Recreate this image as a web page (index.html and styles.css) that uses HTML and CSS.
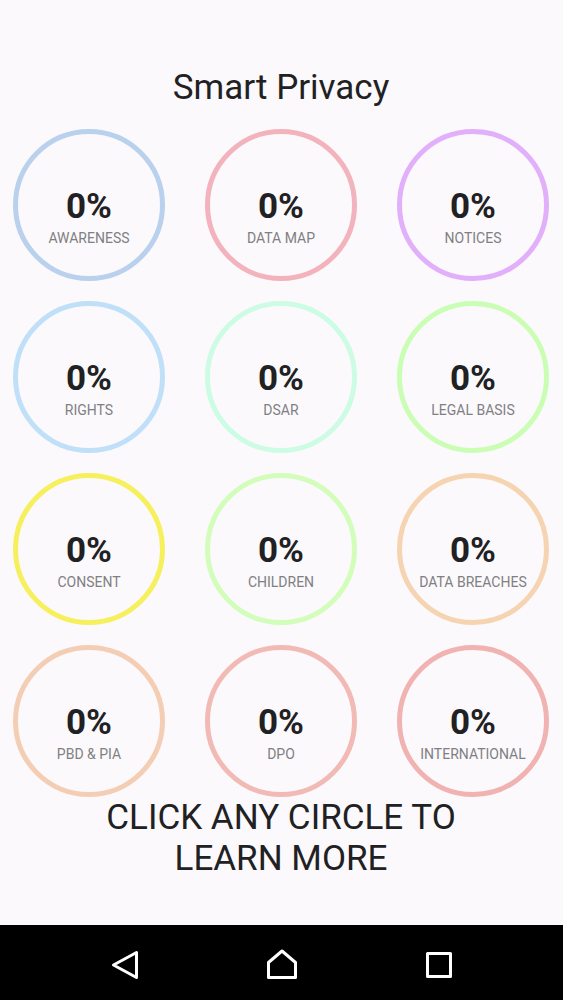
FILE: index.html
```
<!DOCTYPE html>
<html lang="en">
<head>
  <meta charset="UTF-8">
  <meta name="viewport" content="width=device-width, initial-scale=1.0">
  <title>Smart Privacy</title>
  <link rel="stylesheet" href="styles.css">
</head>
<body>
  <main class="content">
    <h1 class="title">Smart Privacy</h1>
    <div class="circles">
      <button type="button" class="circle awareness"><span class="percent">0%</span><span class="label">AWARENESS</span></button>
      <button type="button" class="circle data-map"><span class="percent">0%</span><span class="label">DATA MAP</span></button>
      <button type="button" class="circle notices"><span class="percent">0%</span><span class="label">NOTICES</span></button>
      <button type="button" class="circle rights"><span class="percent">0%</span><span class="label">RIGHTS</span></button>
      <button type="button" class="circle dsar"><span class="percent">0%</span><span class="label">DSAR</span></button>
      <button type="button" class="circle legal-basis"><span class="percent">0%</span><span class="label">LEGAL BASIS</span></button>
      <button type="button" class="circle consent"><span class="percent">0%</span><span class="label">CONSENT</span></button>
      <button type="button" class="circle children"><span class="percent">0%</span><span class="label">CHILDREN</span></button>
      <button type="button" class="circle data-breaches"><span class="percent">0%</span><span class="label">DATA BREACHES</span></button>
      <button type="button" class="circle pbd-pia"><span class="percent">0%</span><span class="label">PBD &amp; PIA</span></button>
      <button type="button" class="circle dpo"><span class="percent">0%</span><span class="label">DPO</span></button>
      <button type="button" class="circle international"><span class="percent">0%</span><span class="label">INTERNATIONAL</span></button>
    </div>
    <p class="hint">CLICK ANY CIRCLE TO LEARN MORE</p>
  </main>

  <nav class="navbar">
    <button type="button" class="nav-button" aria-label="Back">
      <svg width="34" height="34" viewBox="0 0 34 34"><path d="M29.500 4.500V29.500L6.500 17Z"/></svg>
    </button>
    <button type="button" class="nav-button" aria-label="Home">
      <svg width="34" height="34" viewBox="0 0 34 34"><path d="M18 3L31.500 14.500V29.500H4.500V14.500Z"/></svg>
    </button>
    <button type="button" class="nav-button" aria-label="Recent apps">
      <svg width="34" height="34" viewBox="0 0 34 34"><path d="M5.500 5.500H28.500V28.500H5.500Z"/></svg>
    </button>
  </nav>
</body>
</html>
```

FILE: styles.css
```
* {
  box-sizing: border-box;
}
body {
  margin: 0;
  min-height: 100vh;
  display: flex;
  flex-direction: column;
  background-color: #fbf9fc;
  color: #212123;
  font-family: Roboto, "Liberation Sans", sans-serif;
}
.content {
  flex: 1;
  padding: 67px 14px 0 13px;
}
.title,
.hint {
  margin: 0;
  font-size: 35px;
  font-weight: 400;
  line-height: 41px;
  text-align: center;
}
.circles {
  display: grid;
  grid-template-columns: repeat(3, 1fr);
  gap: 20px 40px;
  margin-top: 21px;
}
.circle {
  aspect-ratio: 1;
  display: flex;
  flex-direction: column;
  align-items: center;
  justify-content: center;
  padding: 22px 0 0;
  border: 5px solid;
  border-radius: 50%;
  background: none;
  font-family: inherit;
  white-space: nowrap;
  cursor: pointer;
}
.percent {
  color: #212123;
  font-size: 35px;
  font-weight: 700;
  line-height: 43px;
}
.label {
  color: #808082;
  font-size: 14px;
  line-height: 20px;
}
.awareness {
  border-color: #b9d1ed;
}
.data-map {
  border-color: #f3b3bd;
}
.notices {
  border-color: #e2b0fa;
}
.rights {
  border-color: #bfe0f8;
}
.dsar {
  border-color: #ccfce3;
}
.legal-basis {
  border-color: #cbfeb5;
}
.consent {
  border-color: #f5f05c;
}
.children {
  border-color: #d2fdba;
}
.data-breaches {
  border-color: #f6d4b2;
}
.pbd-pia {
  border-color: #f4ceb4;
}
.dpo {
  border-color: #f2bab4;
}
.international {
  border-color: #f1b3b2;
}
.hint {
  max-width: 400px;
  margin: 0 auto;
}
.navbar {
  display: grid;
  grid-template-columns: repeat(3, 1fr);
  height: 75px;
  padding: 4px 8% 0;
  background-color: #000;
}
.nav-button {
  display: flex;
  align-items: center;
  justify-content: center;
  padding: 0;
  border: 0;
  background: none;
  cursor: pointer;
}
.nav-button svg {
  fill: none;
  stroke: #fff;
  stroke-width: 3;
  stroke-linejoin: round;
}
```
